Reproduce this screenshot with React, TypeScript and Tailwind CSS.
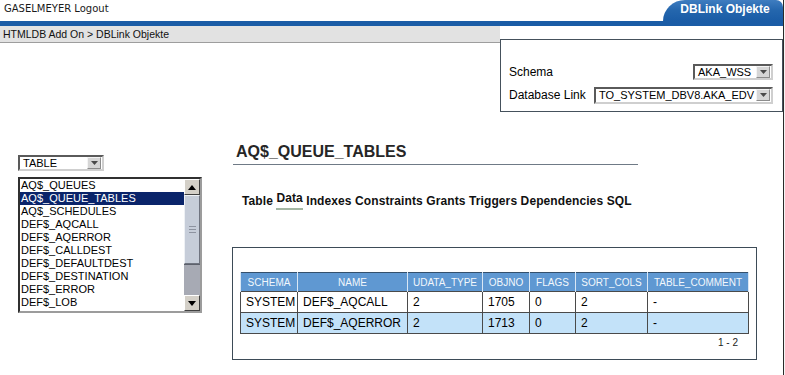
import React from "react";

const objects = [
  "AQ$_QUEUES",
  "AQ$_QUEUE_TABLES",
  "AQ$_SCHEDULES",
  "DEF$_AQCALL",
  "DEF$_AQERROR",
  "DEF$_CALLDEST",
  "DEF$_DEFAULTDEST",
  "DEF$_DESTINATION",
  "DEF$_ERROR",
  "DEF$_LOB",
];

const columns = [
  { label: "SCHEMA", w: "w-[57px]" },
  { label: "NAME", w: "w-[110px]" },
  { label: "UDATA_TYPE", w: "w-[75px]" },
  { label: "OBJNO", w: "w-[47px]" },
  { label: "FLAGS", w: "w-[46px]" },
  { label: "SORT_COLS", w: "w-[72px]" },
  { label: "TABLE_COMMENT", w: "w-[101px]" },
];

const rows = [
  ["SYSTEM", "DEF$_AQCALL", "2", "1705", "0", "2", "-"],
  ["SYSTEM", "DEF$_AQERROR", "2", "1713", "0", "2", "-"],
];

const tabs = ["Table", "Data", "Indexes", "Constraints", "Grants", "Triggers", "Dependencies", "SQL"];

function DropButton() {
  return (
    <div className="w-[14px] h-[12px] shrink-0 bg-[#d6d6d6] border border-t-[#f4f4f4] border-l-[#f4f4f4] border-r-[#8c8c8c] border-b-[#8c8c8c] flex items-center justify-center">
      <svg width="7" height="4" viewBox="0 0 7 4">
        <polygon points="0,0 7,0 3.5,4" fill="#4a4a4a" />
      </svg>
    </div>
  );
}

function SelectBox({ value, className }: { value: string; className: string }) {
  return (
    <div
      className={`flex items-center justify-between bg-white border-2 border-t-[#5a5a5a] border-l-[#5a5a5a] border-r-[#cfcfcf] border-b-[#cfcfcf] pl-[3px] pr-[1px] text-[11px] leading-none text-black ${className}`}
    >
      <span className="whitespace-nowrap">{value}</span>
      <DropButton />
    </div>
  );
}

function ScrollArrow({ up }: { up?: boolean }) {
  return (
    <div className="h-[16px] shrink-0 bg-[#d4d0c8] border border-t-[#ffffff] border-l-[#ffffff] border-r-[#404040] border-b-[#404040] flex items-center justify-center">
      <svg width="8" height="5" viewBox="0 0 8 5">
        <polygon points={up ? "0,5 8,5 4,0" : "0,0 8,0 4,5"} fill="#000" />
      </svg>
    </div>
  );
}

function ObjectList() {
  return (
    <div className="w-[184px] h-[136px] flex bg-white border-2 border-t-[#303030] border-l-[#303030] border-r-[#9c9c9c] border-b-[#9c9c9c]">
      <div className="flex-1 flex flex-col text-[11px] leading-[13px] text-black">
        {objects.map((o, i) => (
          <div
            key={o}
            className={`h-[13px] pl-[1px] whitespace-nowrap ${i === 1 ? "bg-[#0a246a] text-white" : ""}`}
          >
            {o}
          </div>
        ))}
      </div>
      <div className="w-[16px] flex flex-col bg-[#a7aab4]">
        <ScrollArrow up />
        <div className="h-[69px] bg-[#c6cdd9] border border-t-[#eef1f5] border-l-[#eef1f5] border-r-[#6f7480] border-b-[#6f7480] flex flex-col items-center justify-center gap-[2px]">
          <div className="w-[7px] h-px bg-[#8d93a0]" />
          <div className="w-[7px] h-px bg-[#8d93a0]" />
          <div className="w-[7px] h-px bg-[#8d93a0]" />
        </div>
        <div className="flex-1 border-t border-[#5d616c]" />
        <ScrollArrow />
      </div>
    </div>
  );
}

export default function App() {
  return (
    <div className="w-[785px] h-[375px] overflow-hidden bg-white flex font-['Liberation_Sans',Arial,sans-serif] text-black">
      <div className="w-[783px] flex flex-col">
        {/* Header */}
        <div className="h-[21px] flex justify-between items-start">
          <div className="pl-[4px] pt-[2px] text-[10px] leading-[13px] text-[#1a1a1a] font-['DejaVu_Sans',Verdana,sans-serif]">
            GASELMEYER Logout
          </div>
          <div className="w-[120px] h-[21px] rounded-tl-[22px_21px] rounded-tr-[7px] bg-linear-to-b from-[#3f7dc0] via-[#2466ad] to-[#1a5ca6] flex items-start justify-center pt-[2px] pl-[4px]">
            <span className="text-white text-[12px] leading-[14px] font-bold">DBLink Objekte</span>
          </div>
        </div>
        <div className="h-[5px] bg-[#1a5ca6]" />

        {/* Breadcrumb + settings region */}
        <div className="flex h-[86px]">
          <div className="w-[500px]">
            <div className="h-[17px] bg-[#e2e2e2] border-b border-[#9d9d9d] pl-[3px] pt-[1px] text-[10.5px] leading-[15px] text-[#111]">
              HTMLDB Add On &gt; DBLink Objekte
            </div>
          </div>
          <div className="w-[283px] pt-[13px]">
            <div className="h-[73px] border border-[#45515c] pl-[8px] pr-[9px] pt-[23px] flex flex-col gap-[5px] text-[12px]">
              <div className="flex items-center justify-between">
                <span>Schema</span>
                <SelectBox value="AKA_WSS" className="w-[80px] h-[16px]" />
              </div>
              <div className="flex items-center justify-between">
                <span>Database Link</span>
                <SelectBox value="TO_SYSTEM_DBV8.AKA_EDV" className="w-[179px] h-[17px] text-[10.5px]" />
              </div>
            </div>
          </div>
        </div>

        {/* Content */}
        <div className="flex">
          <div className="w-[232px] shrink-0 pl-[18px] pt-[43px] flex flex-col gap-[6px]">
            <SelectBox value="TABLE" className="w-[86px] h-[16px]" />
            <ObjectList />
          </div>

          <div className="w-[526px] flex flex-col">
            <div className="ml-[1px] w-[405px] pt-[31px] pb-[3px] border-b border-[#6f7a86]">
              <h1 className="pl-[3px] text-[16px] leading-[18px] font-bold text-[#262626]">AQ$_QUEUE_TABLES</h1>
            </div>

            <div className="mt-[29px] pl-[10px] text-[12px] leading-[14px] font-bold text-[#111] whitespace-nowrap tracking-[0.1px]">
              {tabs.map((t, i) => (
                <React.Fragment key={t}>
                  {i > 0 && " "}
                  {t === "Data" ? (
                    <span className="relative -top-[3px] pb-[3px] border-b-2 border-[#a3b6a3]">{t}</span>
                  ) : (
                    <span>{t}</span>
                  )}
                </React.Fragment>
              ))}
            </div>

            <div className="mt-[39px] w-[525px] h-[113px] border border-[#3d4b57] pl-[7px] pt-[24px] flex flex-col">
              <table className="w-[508px] table-fixed border-collapse border border-[#34506c]">
                <colgroup>
                  {columns.map((c) => (
                    <col key={c.label} className={c.w} />
                  ))}
                </colgroup>
                <thead>
                  <tr className="h-[19px] bg-[#5f98d2]">
                    {columns.map((c) => (
                      <th
                        key={c.label}
                        className="p-0 border-x border-[#d9e7f5] text-[10px] font-normal text-[#f2f7fc] text-center whitespace-nowrap"
                      >
                        {c.label}
                      </th>
                    ))}
                  </tr>
                </thead>
                <tbody>
                  {rows.map((r, ri) => (
                    <tr key={ri} className={`h-[21px] ${ri === 1 ? "bg-[#c3e2f9]" : "bg-white"}`}>
                      {r.map((v, ci) => (
                        <td key={ci} className="p-0 pl-[5px] border border-[#4a4a4a] text-[12px] whitespace-nowrap">
                          {v}
                        </td>
                      ))}
                    </tr>
                  ))}
                </tbody>
              </table>
              <div className="mt-[3px] pr-[18px] text-right text-[10px] leading-[12px] text-[#222]">1 - 2</div>
            </div>
          </div>
        </div>
      </div>
      <div className="w-[2px] border-l border-[#2a2a2a] bg-[#f4f4f4]" />
    </div>
  );
}
